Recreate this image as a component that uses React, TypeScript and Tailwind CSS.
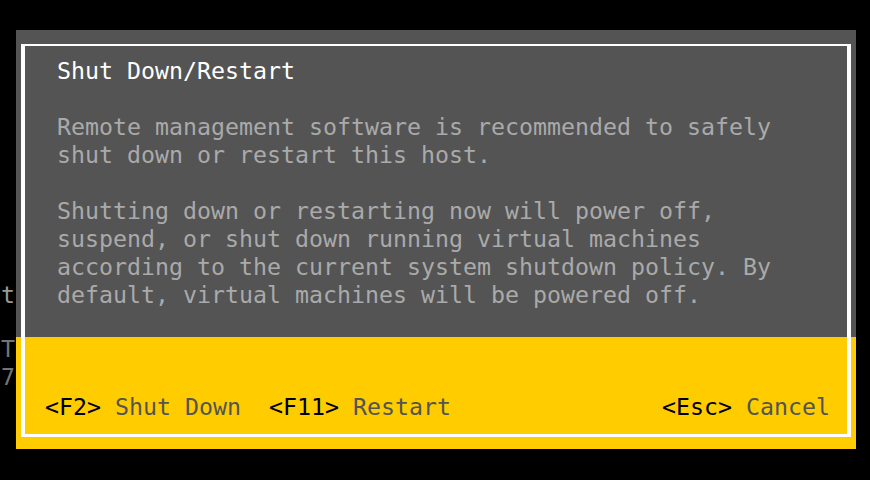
const bodyA = [
  "Remote management software is recommended to safely",
  "shut down or restart this host.",
];

const bodyB = [
  "Shutting down or restarting now will power off,",
  "suspend, or shut down running virtual machines",
  "according to the current system shutdown policy. By",
  "default, virtual machines will be powered off.",
];

const Line = ({ text, className = "" }: { text: string; className?: string }) => (
  <div className={`h-[28px] shrink-0 whitespace-pre ${className}`}>{text}</div>
);

const App = () => {
  return (
    <div className="w-[870px] h-[480px] bg-black flex overflow-hidden font-['DejaVu_Sans_Mono',monospace] text-[23.25px] leading-[28px]">
      {/* left edge of the console behind the dialog */}
      <div className="w-[16px] shrink-0 overflow-hidden flex flex-col pt-[281px] pl-[1px]">
        <div className="h-[28px] shrink-0 text-[#9a9a9a]">t</div>
        <div className="h-[26px] shrink-0" />
        <div className="h-[28px] shrink-0 text-[#747474]">T</div>
        <div className="h-[28px] shrink-0 text-[#747474]">7</div>
      </div>

      {/* dialog */}
      <div className="mt-[30px] w-[840px] h-[419px] shrink-0 px-[5px] pt-[14px] pb-[12px] bg-[linear-gradient(to_bottom,#545454_307px,#ffcc00_307px)]">
        <div className="h-full border-white border-x-4 border-t-2 border-b-[3px] flex flex-col pt-[11px] pb-[13px]">
          <div className="pl-[32px] flex flex-col">
            <Line text="Shut Down/Restart" className="text-white" />
            <Line text="" />
            {bodyA.map((t) => (
              <Line key={t} text={t} className="text-[#aaaaaa]" />
            ))}
            <Line text="" />
            {bodyB.map((t) => (
              <Line key={t} text={t} className="text-[#aaaaaa]" />
            ))}
          </div>

          {/* footer keys */}
          <div className="mt-auto h-[28px] shrink-0 flex justify-between pl-[20px] pr-[17px] whitespace-pre">
            <div>
              <span className="text-black">&lt;F2&gt;</span>
              <span className="text-[#545454]"> Shut Down  </span>
              <span className="text-black">&lt;F11&gt;</span>
              <span className="text-[#545454]"> Restart</span>
            </div>
            <div>
              <span className="text-black">&lt;Esc&gt;</span>
              <span className="text-[#545454]"> Cancel</span>
            </div>
          </div>
        </div>
      </div>
    </div>
  );
};

export default App;
